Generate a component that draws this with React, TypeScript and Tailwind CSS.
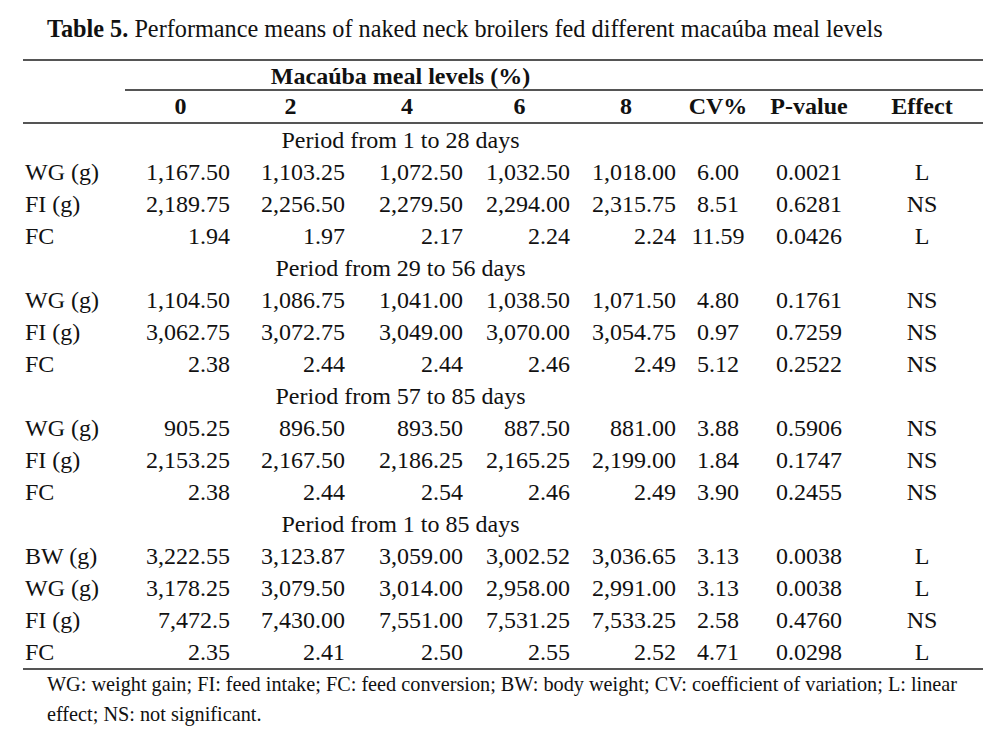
import React from "react";

// column template shared by every row of the table
const cols = "grid grid-cols-[102px_105px_115px_118px_107px_106px_84px_98px_125px]";

type Row = { label: string; v: string[]; cv: string; p: string; eff: string };
type Block = { period: string; rows: Row[] };

const data: Block[] = [
  {
    period: "Period from 1 to 28 days",
    rows: [
      { label: "WG (g)", v: ["1,167.50", "1,103.25", "1,072.50", "1,032.50", "1,018.00"], cv: "6.00", p: "0.0021", eff: "L" },
      { label: "FI (g)", v: ["2,189.75", "2,256.50", "2,279.50", "2,294.00", "2,315.75"], cv: "8.51", p: "0.6281", eff: "NS" },
      { label: "FC", v: ["1.94", "1.97", "2.17", "2.24", "2.24"], cv: "11.59", p: "0.0426", eff: "L" },
    ],
  },
  {
    period: "Period from 29 to 56 days",
    rows: [
      { label: "WG (g)", v: ["1,104.50", "1,086.75", "1,041.00", "1,038.50", "1,071.50"], cv: "4.80", p: "0.1761", eff: "NS" },
      { label: "FI (g)", v: ["3,062.75", "3,072.75", "3,049.00", "3,070.00", "3,054.75"], cv: "0.97", p: "0.7259", eff: "NS" },
      { label: "FC", v: ["2.38", "2.44", "2.44", "2.46", "2.49"], cv: "5.12", p: "0.2522", eff: "NS" },
    ],
  },
  {
    period: "Period from 57 to 85 days",
    rows: [
      { label: "WG (g)", v: ["905.25", "896.50", "893.50", "887.50", "881.00"], cv: "3.88", p: "0.5906", eff: "NS" },
      { label: "FI (g)", v: ["2,153.25", "2,167.50", "2,186.25", "2,165.25", "2,199.00"], cv: "1.84", p: "0.1747", eff: "NS" },
      { label: "FC", v: ["2.38", "2.44", "2.54", "2.46", "2.49"], cv: "3.90", p: "0.2455", eff: "NS" },
    ],
  },
  {
    period: "Period from 1 to 85 days",
    rows: [
      { label: "BW (g)", v: ["3,222.55", "3,123.87", "3,059.00", "3,002.52", "3,036.65"], cv: "3.13", p: "0.0038", eff: "L" },
      { label: "WG (g)", v: ["3,178.25", "3,079.50", "3,014.00", "2,958.00", "2,991.00"], cv: "3.13", p: "0.0038", eff: "L" },
      { label: "FI (g)", v: ["7,472.5", "7,430.00", "7,551.00", "7,531.25", "7,533.25"], cv: "2.58", p: "0.4760", eff: "NS" },
      { label: "FC", v: ["2.35", "2.41", "2.50", "2.55", "2.52"], cv: "4.71", p: "0.0298", eff: "L" },
    ],
  },
];

const levels = ["0", "2", "4", "6", "8"];

export default function App() {
  return (
    <div
      className="min-h-screen bg-white text-[#111] text-[24px]"
      style={{ fontFamily: '"Liberation Serif", "Times New Roman", serif' }}
    >
      <div className="pt-[15px] pl-[47px] leading-[28px] text-[24.25px]">
        <span className="font-bold">Table 5.</span> Performance means of naked neck broilers fed different macaúba meal levels
      </div>

      <div className="mt-[16px] ml-[23px] w-[960px]">
        <div className="border-t-2 border-[#555]" />

        {/* level header */}
        <div className="flex h-[30px] leading-[30px]">
          <div className="w-[102px]" />
          <div className="flex-1 border-b-2 border-[#555] box-content">
            <div className="w-[551px] text-center font-bold">Macaúba meal levels (%)</div>
          </div>
        </div>

        <div className={`${cols} h-[31px] leading-[31px] font-bold border-b-2 border-[#555] box-content`}>
          <div />
          {levels.map((l) => (
            <div key={l} className="text-center pl-[6px]">{l}</div>
          ))}
          <div className="text-center">CV%</div>
          <div className="text-center">P-value</div>
          <div className="text-center pl-[3px]">Effect</div>
        </div>

        {data.map((b) => (
          <div key={b.period}>
            <div className={`${cols} h-8 leading-8`}>
              <div />
              <div className="col-span-5 text-center">{b.period}</div>
            </div>
            {b.rows.map((r, i) => (
              <div key={i} className={`${cols} h-8 leading-8`}>
                <div className="pl-[2px]">{r.label}</div>
                {r.v.map((x, j) => (
                  <div key={j} className="text-right">{x}</div>
                ))}
                <div className="text-center">{r.cv}</div>
                <div className="text-center">{r.p}</div>
                <div className="text-center pl-[3px]">{r.eff}</div>
              </div>
            ))}
          </div>
        ))}

        <div className="border-t-2 border-[#555]" />

        <div className="pl-[24px] text-[20.25px] leading-[30px] -mt-[1px]">
          WG: weight gain; FI: feed intake; FC: feed conversion; BW: body weight; CV: coefficient of variation; L: linear
          effect; NS: not significant.
        </div>
      </div>
    </div>
  );
}
